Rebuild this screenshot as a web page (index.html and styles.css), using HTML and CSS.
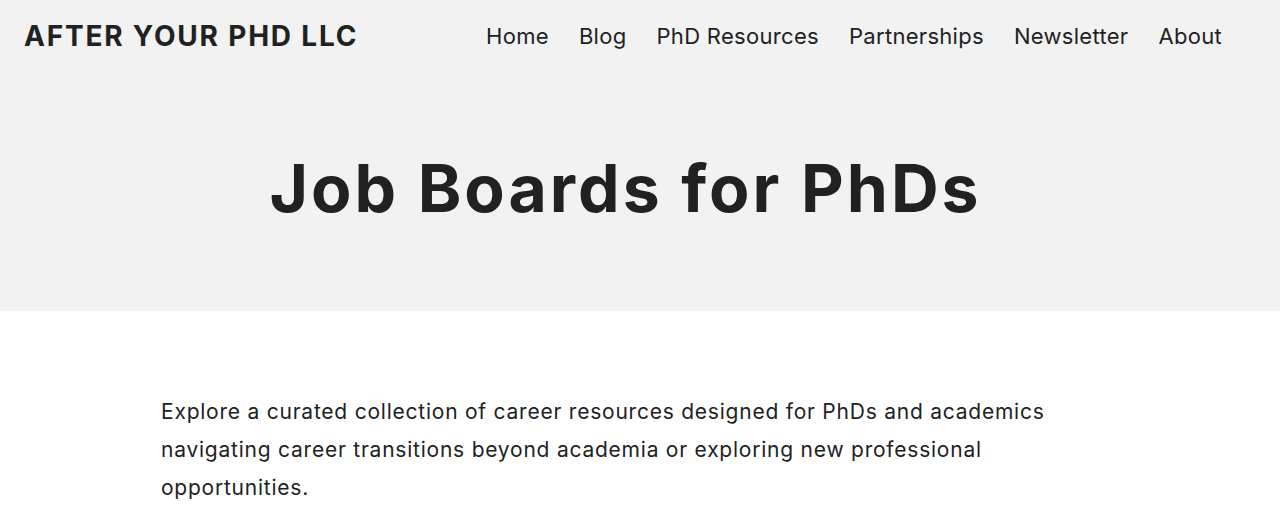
FILE: index.html
```html
<!DOCTYPE html>
<html lang="en">
<head>
<meta charset="utf-8">
<title>Job Boards for PhDs</title>
<link rel="stylesheet" href="styles.css">
</head>
<body>
<div class="band">
  <header class="header">
    <div class="logo">AFTER YOUR PHD LLC</div>
    <nav class="nav">
      <a href="#">Home</a>
      <a href="#">Blog</a>
      <a href="#">PhD Resources</a>
      <a href="#">Partnerships</a>
      <a href="#">Newsletter</a>
      <a href="#">About</a>
    </nav>
  </header>
  <h1 class="title">Job Boards for PhDs</h1>
</div>
<main class="content">
  <p class="intro">Explore a curated collection of career resources designed for PhDs and academics navigating career transitions beyond academia or exploring new professional opportunities.</p>
</main>
</body>
</html>
```
FILE: styles.css
```css
html, body {
  margin: 0;
  padding: 0;
  background: #ffffff;
  color: #21221f;
  font-family: "Inter", "Noto Sans", sans-serif;
}
.band {
  background: #f2f2f2;
  height: 311px;
  display: flex;
  flex-direction: column;
}
.header {
  display: flex;
  align-items: center;
  justify-content: space-between;
  height: 72px;
  padding: 0 58px 0 24px;
}
.logo {
  font-size: 28px;
  font-weight: 700;
  letter-spacing: 1.8px;
}
.nav {
  display: flex;
  gap: 30px;
}
.nav a {
  color: #21221f;
  text-decoration: none;
  font-size: 22px;
  letter-spacing: 0.3px;
}
.title {
  margin: 0;
  text-align: center;
  font-size: 66px;
  font-weight: 700;
  letter-spacing: 3px;
  padding: 76px 29px 0 0;
  line-height: 80px;
}
.content {
  width: 960px;
  margin: 0 auto;
  padding-top: 82px;
}
.intro {
  margin: 0;
  padding-left: 1px;
  font-size: 21px;
  letter-spacing: 0.77px;
  line-height: 38px;
  padding-right: 60px;
}
```
